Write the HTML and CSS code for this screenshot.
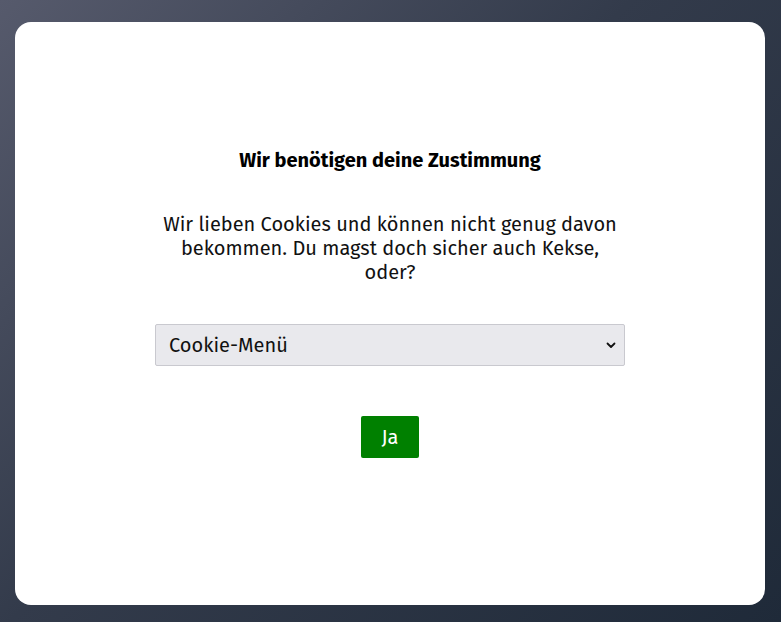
FILE: index.html
```html
<!DOCTYPE html>
<html lang="de">
<head>
<meta charset="utf-8">
<title>Cookie-Zustimmung</title>
<link rel="stylesheet" href="styles.css">
</head>
<body>
<main class="card">
  <h1 class="title">Wir benötigen deine Zustimmung</h1>
  <p class="text">Wir lieben Cookies und können nicht genug davon bekommen. Du magst doch sicher auch Kekse, oder?</p>
  <div class="select">
    <span class="select-label">Cookie-Menü</span>
    <svg class="chevron" width="10" height="7" viewBox="0 0 10 7" aria-hidden="true"><path d="M1.5 1.5 L5 5 L8.5 1.5" fill="none" stroke="#111" stroke-width="1.8" stroke-linecap="round" stroke-linejoin="round"/></svg>
  </div>
  <button class="btn" type="button">Ja</button>
</main>
</body>
</html>
```
FILE: styles.css
```css
html, body {
  margin: 0;
  height: 100%;
}
body {
  box-sizing: border-box;
  padding: 22px 16px 17px 15px;
  background: linear-gradient(135deg, #565a6c 0%, #333b4b 45%, #1f2a39 100%);
  font-family: "Fira Sans", "Noto Sans", "Open Sans", sans-serif;
  display: flex;
}
.card {
  flex: 1;
  background: #fff;
  border-radius: 16px;
  display: flex;
  flex-direction: column;
  align-items: center;
  padding-top: 126px;
}
.title {
  margin: 0;
  font-size: 20px;
  line-height: 24px;
  font-weight: 700;
  color: #000;
}
.text {
  margin: 40px 0 0;
  width: 462px;
  text-align: center;
  font-size: 20px;
  line-height: 24px;
  color: #111;
}
.select {
  box-sizing: border-box;
  margin-top: 40px;
  width: 470px;
  height: 42px;
  background: #e9e9ed;
  border: 1px solid #c9c9cf;
  border-radius: 2px;
  display: flex;
  align-items: center;
  justify-content: space-between;
  padding: 0 8px 0 13px;
}
.select-label {
  font-size: 20px;
  color: #111;
}
.btn {
  margin-top: 50px;
  width: 58px;
  height: 42px;
  border: 0;
  border-radius: 2px;
  background: #008000;
  color: #fff;
  font-family: inherit;
  font-size: 20px;
  padding: 0;
}
```
